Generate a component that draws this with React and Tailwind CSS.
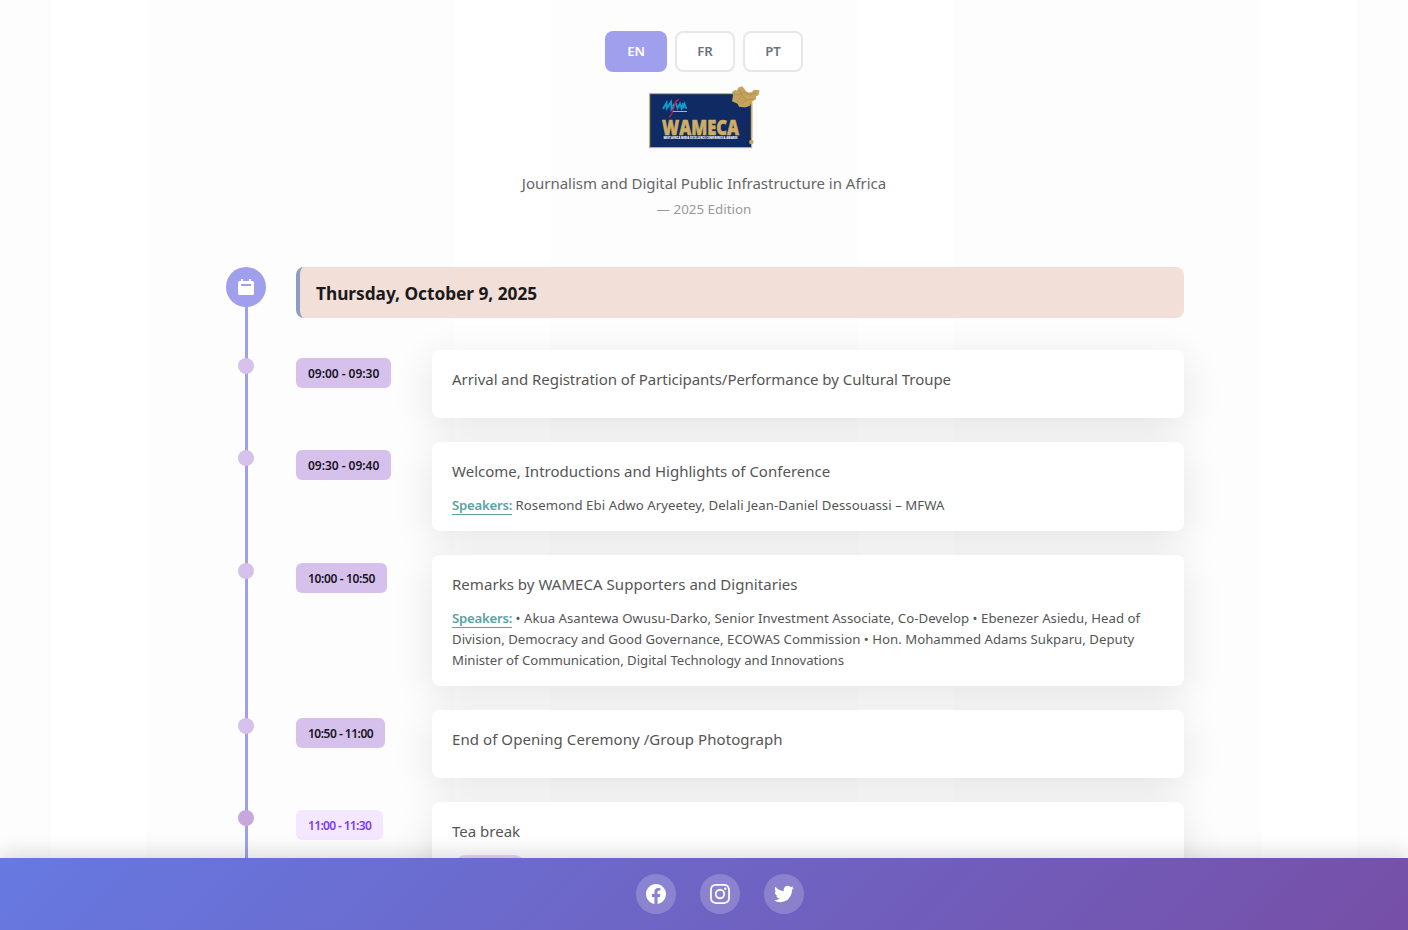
import React from "react";

const sessions = [
  { time: "09:00 - 09:30", timeWidth: "w-[95px]", timeTrack: "tracking-[-0.03px]", height: "h-[68px]", title: "Arrival and Registration of Participants/Performance by Cultural Troupe", track: "tracking-[-0.04px]" },
  { time: "09:30 - 09:40", timeWidth: "w-[95px]", timeTrack: "tracking-[-0.03px]", height: "h-[89px]", title: "Welcome, Introductions and Highlights of Conference", track: "tracking-[0.01px]", speakers: ["Rosemond Ebi Adwo Aryeetey, Delali Jean-Daniel Dessouassi – MFWA"], lineTracks: ["tracking-[0.07px]"] },
  { time: "10:00 - 10:50", timeWidth: "w-[91px]", timeTrack: "tracking-[-0.35px]", height: "h-[131px]", title: "Remarks by WAMECA Supporters and Dignitaries", track: "tracking-[0.04px]", speakers: [
    "• Akua Asantewa Owusu-Darko, Senior Investment Associate, Co-Develop • Ebenezer Asiedu, Head of",
    "Division, Democracy and Good Governance, ECOWAS Commission • Hon. Mohammed Adams Sukparu, Deputy",
    "Minister of Communication, Digital Technology and Innovations",
  ], lineTracks: ["tracking-[0.03px]", "tracking-[0.02px]", "tracking-[-0.03px]"] },
  { time: "10:50 - 11:00", timeWidth: "w-[89px]", timeTrack: "tracking-[-0.5px]", height: "h-[68px]", title: "End of Opening Ceremony /Group Photograph", track: "tracking-[0.07px]" },
  { time: "11:00 - 11:30", timeWidth: "w-[87px]", timeTrack: "tracking-[-0.65px]", height: "h-[110px]", title: "Tea break", track: "tracking-normal", pause: true },
];

function Logo() {
  return (
    <svg width="112" height="66" viewBox="0 0 112 66" role="img" aria-label="WAMECA">
      <rect x="1.6" y="9.6" width="102" height="54" fill="#102a63" stroke="#c9ad6b" strokeWidth="1.2" />
      <path d="M103.6 18v36" stroke="#c9ad6b" strokeWidth="1.6" />
      <path d="M84 8l3-2 2 .5 1.500-3 3.500-1.200 2 2 2 3 3 1.500 3-1 2-2 5.500.5-1 5-2.500 1 0 3-4.500 2.500-1.500 4-4 1.500-3 0-4-.5-1.500-3-5.500-2.500 1-6z" fill="#c5a35b" />
      <path d="M85 10l6 1 5-3 6 3 6-2M91 5l3 6-5 7M94 11l4 5 8-1M98 16l-5 4" fill="none" stroke="#a58748" strokeWidth=".6" />
      <circle cx="103.3" cy="58" r="2.2" fill="#c5a35b" />
      <path d="M15 25l3.500-6 .5 5 4-6 .5 7 3-5" fill="none" stroke="#1499c8" strokeWidth="2" />
      <path d="M28 19l1.500 5.500 2.500-5 1.500 5 1.500-5.500M34.500 25l2-5.500 2 5.500M35 23h3" fill="none" stroke="#1499c8" strokeWidth="1.7" />
      <path d="M31 16c-6-1-4 14-10 17" fill="none" stroke="#d52445" strokeWidth="1.2" />
      <path d="M25 27.500h14" stroke="#c9d3e5" strokeWidth=".8" />
      <text x="14" y="50.5" textLength="77" lengthAdjust="spacingAndGlyphs" fill="#cdae63" stroke="#cdae63" strokeWidth=".6" fontFamily="Open Sans, sans-serif" fontWeight="800" fontSize="21">WAMECA</text>
      <text x="15.5" y="55.4" textLength="74" lengthAdjust="spacingAndGlyphs" fill="#ffffff" fontFamily="Open Sans, sans-serif" fontWeight="800" fontSize="2.8">WEST AFRICA MEDIA EXCELLENCE CONFERENCE &amp; AWARDS</text>
    </svg>
  );
}

function Session({ item }) {
  const badge = item.pause ? "bg-[#f3e8ff] text-[#7c3aed]" : "bg-[#d5c1eb] text-[#17131f]";
  const dot = item.pause ? "bg-[#c9a7de]" : "bg-[#d5c1eb]";
  return (
    <div className="flex items-start">
      <div className="flex w-10 shrink-0 justify-center pt-2">
        <div className={`h-4 w-4 rounded-full ${dot}`} />
      </div>
      <div className="ml-[30px] w-[136px] shrink-0 pt-2">
        <div className={`flex h-[30px] items-center whitespace-nowrap rounded-[6px] pl-3 pt-px text-[12px] font-semibold ${item.timeTrack} ${item.timeWidth} ${badge}`}>{item.time}</div>
      </div>
      <div className={`w-[752px] shrink-0 rounded-[8px] bg-white px-5 pt-[17px] shadow-[0_10px_40px_rgba(0,0,0,0.1)] ${item.height}`}>
        <h3 className={`whitespace-nowrap text-[15px] leading-6 text-[#555555] ${item.track}`}>{item.title}</h3>
        {item.speakers && (
          <div className="mt-3 whitespace-nowrap text-[13.2px] leading-[21px] text-[#555555]">
            {item.speakers.map((line, i) => (
              <p key={line} className={item.lineTracks[i]}>
                {i === 0 && <><strong className="border-b border-[#5aa2a2] font-semibold tracking-[-0.25px] text-[#5aa2a2]">Speakers:</strong>{" "}</>}
                {line}
              </p>
            ))}
          </div>
        )}
        {item.pause && <div className="ml-0.5 mt-[12px] h-6 w-[72px] rounded-full bg-[#e6d8f2]" />}
      </div>
    </div>
  );
}

const socialPaths = [
  { name: "Facebook", d: "M24 12.073C24 5.405 18.627 0 12 0S0 5.405 0 12.073C0 18.1 4.388 23.094 10.125 24v-8.437H7.078v-3.49h3.047v-2.66c0-3.025 1.791-4.697 4.533-4.697 1.312 0 2.686.235 2.686.235v2.97h-1.513c-1.491 0-1.956.93-1.956 1.886v2.266h3.328l-.532 3.49h-2.796V24C19.612 23.094 24 18.1 24 12.073z" },
  { name: "Instagram", d: "M12 2.163c3.204 0 3.584.012 4.85.07 3.252.148 4.771 1.691 4.919 4.919.058 1.265.069 1.645.069 4.849s-.012 3.584-.069 4.849c-.149 3.225-1.664 4.771-4.919 4.919-1.266.058-1.644.07-4.85.07s-3.584-.012-4.849-.07c-3.26-.149-4.771-1.699-4.919-4.92C2.174 15.584 2.163 15.204 2.163 12s.012-3.584.07-4.849c.149-3.227 1.664-4.771 4.919-4.919C8.417 2.175 8.796 2.163 12 2.163zM12 0C8.741 0 8.333.014 7.053.072 2.695.272.273 2.69.073 7.052.014 8.333 0 8.741 0 12s.014 3.668.072 4.948c.2 4.358 2.618 6.78 6.98 6.98C8.333 23.986 8.741 24 12 24s3.668-.014 4.948-.072c4.354-.2 6.782-2.618 6.979-6.98.059-1.28.073-1.689.073-4.948s-.014-3.667-.072-4.947C23.732 2.699 21.311.273 16.949.073 15.668.014 15.259 0 12 0zm0 5.838a6.162 6.162 0 100 12.324 6.162 6.162 0 000-12.324zM12 16a4 4 0 110-8 4 4 0 010 8zm6.406-11.845a1.44 1.44 0 100 2.881 1.44 1.44 0 000-2.881z" },
  { name: "Twitter", d: "M23.953 4.57a10 10 0 01-2.825.775 4.958 4.958 0 002.163-2.723 10.1 10.1 0 01-3.127 1.184 4.92 4.92 0 00-8.384 4.482C7.69 8.095 4.067 6.13 1.64 3.162a4.82 4.82 0 00-.666 2.475c0 1.71.87 3.213 2.188 4.096a4.904 4.904 0 01-2.228-.616v.06a4.923 4.923 0 003.946 4.827 4.996 4.996 0 01-2.212.085 4.936 4.936 0 004.604 3.417 9.867 9.867 0 01-6.102 2.105c-.39 0-.779-.023-1.17-.067a13.995 13.995 0 007.557 2.209c9.053 0 13.998-7.496 13.998-13.985 0-.21 0-.42-.015-.63A9.935 9.935 0 0024 4.59z" },
];

export default function App() {
  return (
    <div className="flex h-[930px] flex-col overflow-hidden bg-[linear-gradient(90deg,#fdfdfd_0_51px,#ffffff_51px_147px,#fdfdfd_147px_454px,#ffffff_454px_550px,#fdfdfd_550px_858px,#ffffff_858px_954px,#fdfdfd_954px_1261px,#ffffff_1261px_1357px,#fdfdfd_1357px)] font-['Noto_Sans',sans-serif]">
      <main className="h-[858px] shrink-0 overflow-hidden">
        <header className="flex h-[267px] flex-col items-center pt-[31px]">
          <div className="flex gap-2 text-[13.2px] font-semibold tracking-[-0.1px]">
            <button className="h-[41px] w-[62px] rounded-[8px] bg-[#a09fed] pt-px text-white">EN</button>
            <button className="h-[41px] w-[60px] rounded-[8px] border-2 border-[#e5e7eb] bg-white pt-px text-[#6b7280]">FR</button>
            <button className="h-[41px] w-[60px] rounded-[8px] border-2 border-[#e5e7eb] bg-white pt-px text-[#6b7280]">PT</button>
          </div>
          <div className="mt-3 h-[66px]"><Logo /></div>
          <p className="mt-[21px] whitespace-nowrap text-[15px] leading-6 tracking-[-0.02px] text-[#666666]">Journalism and Digital Public Infrastructure in Africa</p>
          <p className="mt-1 whitespace-nowrap text-[13.4px] leading-[21px] text-[#999999]">— 2025 Edition</p>
        </header>
        <section className="relative ml-[226px] w-[958px]">
          <div className="absolute left-[19px] top-5 h-[900px] w-[3px] bg-[#a09fed]" />
          <div className="relative">
            <div className="flex items-start">
              <div className="flex h-10 w-10 items-center justify-center rounded-full bg-[#a09fed]">
                <svg width="16" height="16" viewBox="0 0 16 16">
                  <path fill="#fff" fillRule="evenodd" d="M1.500 2H3V0h2v2h6V0h2v2h1.500A1.500 1.500 0 0116 3.500v11a1.500 1.500 0 01-1.500 1.500h-13A1.500 1.500 0 010 14.500v-11A1.500 1.500 0 011.500 2zM3 5v2h10V5z" />
                </svg>
              </div>
              <h2 className="ml-[30px] flex h-[51px] w-[888px] items-center rounded-[8px] border-l-4 border-[#8b9dc3] bg-[#f2dfd8] pl-4 pt-[2px] text-[17.3px] font-bold tracking-[-0.03px] text-[#1a1a1a]">Thursday, October 9, 2025</h2>
            </div>
            <div className="mt-8 flex flex-col gap-6">
              {sessions.map((item) => <Session key={item.time} item={item} />)}
            </div>
          </div>
        </section>
      </main>
      <footer className="relative flex h-[72px] shrink-0 items-center justify-center gap-6 bg-[linear-gradient(135deg,#6679e1_0%,#764fa7_100%)] pl-8 shadow-[0_-4px_20px_rgba(0,0,0,0.15)]">
        {socialPaths.map((s) => (
          <a key={s.name} aria-label={s.name} className="flex h-10 w-10 items-center justify-center rounded-full bg-white/20">
            <svg width="20" height="20" viewBox="0 0 24 24" fill="#fff"><path d={s.d} /></svg>
          </a>
        ))}
      </footer>
    </div>
  );
}
